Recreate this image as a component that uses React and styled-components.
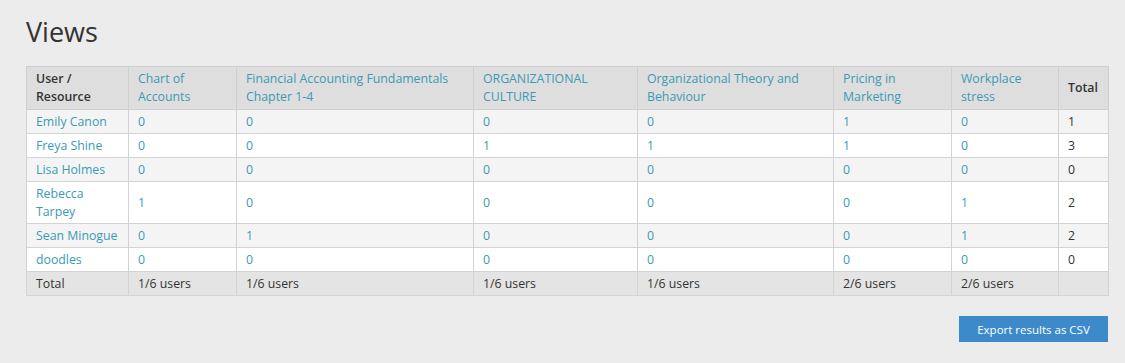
import React from 'react'
import styled, { createGlobalStyle } from 'styled-components'

const GlobalStyle = createGlobalStyle`
  body {
    margin: 0;
    background: #ececec;
    font-family: "Open Sans", "Liberation Sans", sans-serif;
    color: #333;
  }
`

const resources = [
  'Chart of Accounts',
  'Financial Accounting Fundamentals Chapter 1-4',
  'ORGANIZATIONAL CULTURE',
  'Organizational Theory and Behaviour',
  'Pricing in Marketing',
  'Workplace stress',
]

const colWidths = [102, 108, 237, 164, 196, 118, 107, 50]

const users = [
  { name: 'Emily Canon', views: [0, 0, 0, 0, 1, 0] },
  { name: 'Freya Shine', views: [0, 0, 1, 1, 1, 0] },
  { name: 'Lisa Holmes', views: [0, 0, 0, 0, 0, 0] },
  { name: 'Rebecca Tarpey', views: [1, 0, 0, 0, 0, 1] },
  { name: 'Sean Minogue', views: [0, 1, 0, 0, 0, 1] },
  { name: 'doodles', views: [0, 0, 0, 0, 0, 0] },
]

const App = () => {
  const totals = resources.map((_, i) => users.filter(u => u.views[i] > 0).length)

  return (
    <>
      <GlobalStyle />
      <Page>
        <Title>Views</Title>
        <Table>
          <colgroup>
            {colWidths.map((w, i) => <col key={i} style={{ width: w }} />)}
          </colgroup>
          <thead>
            <HeadRow>
              <Th>User /<br />Resource</Th>
              {resources.map(r => <Th key={r}><Link>{r}</Link></Th>)}
              <Th>Total</Th>
            </HeadRow>
          </thead>
          <tbody>
            {users.map((u, idx) => (
              <BodyRow key={u.name} $odd={idx % 2 === 0}>
                <Td><Link>{u.name}</Link></Td>
                {u.views.map((v, i) => <Td key={i}><Link>{v}</Link></Td>)}
                <Td>{u.views.reduce((a, b) => a + b, 0)}</Td>
              </BodyRow>
            ))}
            <TotalRow>
              <Td>Total</Td>
              {totals.map((t, i) => <Td key={i}>{t}/{users.length} users</Td>)}
              <Td></Td>
            </TotalRow>
          </tbody>
        </Table>
        <Actions>
          <Button>Export results as CSV</Button>
        </Actions>
      </Page>
    </>
  )
}

export default App

const Page = styled.div`
  padding: 12px 17px 0 26px;
`

const Title = styled.h1`
  margin: 0 0 14px;
  font-size: 27px;
  font-weight: 400;
  line-height: 40px;
  color: #333;
`

const Table = styled.table`
  width: 1082px;
  border-collapse: collapse;
  table-layout: fixed;
  font-size: 12.3px;
  line-height: 18px;
  border: 1px solid #d3d3d3;
`

const Th = styled.th`
  text-align: left;
  font-weight: 600;
  padding: 3px 9px;
  border: 1px solid #cfcfcf;
  vertical-align: middle;
  color: #333;
`

const Td = styled.td`
  padding: 3px 9px 2px;
  border: 1px solid #d3d3d3;
  vertical-align: middle;
`

const HeadRow = styled.tr`
  background: #dedede;
  ${Th} a { font-weight: 400; }
`

const BodyRow = styled.tr`
  background: ${p => (p.$odd ? '#f4f4f4' : '#ffffff')};
`

const TotalRow = styled.tr`
  background: #e4e4e4;
`

const Link = styled.a`
  color: #3a9bb4;
  text-decoration: none;
  cursor: pointer;
`

const Actions = styled.div`
  display: flex;
  justify-content: flex-end;
  width: 1082px;
  margin-top: 20px;
`

const Button = styled.button`
  width: 149px;
  height: 26px;
  background: #3d8acb;
  color: #fff;
  border: none;
  font-family: inherit;
  font-size: 11.5px;
  cursor: pointer;
`
